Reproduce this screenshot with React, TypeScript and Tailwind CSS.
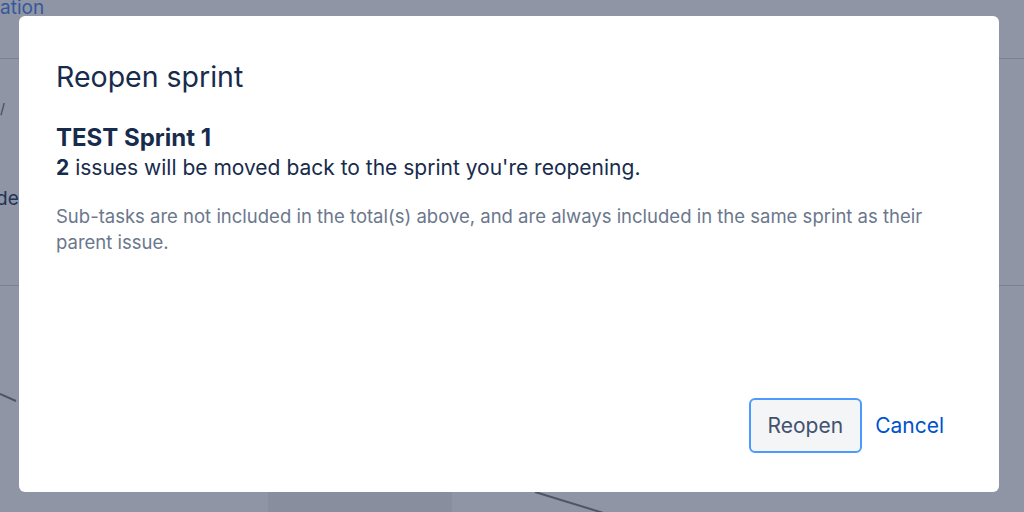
const font = { fontFamily: 'Inter, "Liberation Sans", sans-serif' };

function Backdrop() {
    return (
        <div className="absolute inset-0 bg-[#8f95a4]">
            <div className="absolute left-0 top-[-6px] text-[19px] text-[#1d4a9c] opacity-80">ation</div>
            <div className="absolute left-0 right-0 top-[58px] h-px bg-[#7b8191]" />
            <div className="absolute left-0 top-[98px] text-[14px] text-[#3c4660]">/</div>
            <div className="absolute left-[-4px] top-[185px] text-[19px] text-[#22345a]">de</div>
            <div className="absolute left-0 right-0 top-[285px] h-px bg-[#7b8191]" />
            <div className="absolute left-[268px] top-[480px] w-[184px] h-[40px] bg-[#888e9d]" />
            <svg className="absolute inset-0" width="1024" height="512">
                <line x1="0" y1="394" x2="16" y2="401" stroke="#4f5566" strokeWidth="2" />
                <line x1="535" y1="492" x2="610" y2="515" stroke="#4f5566" strokeWidth="2" />
            </svg>
        </div>
    );
}

export default function App() {
    return (
        <div className="relative w-[1024px] h-[512px] overflow-hidden" style={font}>
            <Backdrop />
            <div className="relative h-full pt-[16px] pb-[20px] pl-[19px] pr-[25px]">
                <div className="flex h-full flex-col rounded-[6px] bg-white pl-[37px] pr-[55px] pt-[44px] pb-[39px]">
                    <h1 className="text-[28.5px] leading-[34px] font-normal text-[#172b4d]">Reopen sprint</h1>
                    <h2 className="mt-[30px] text-[24px] leading-[28px] font-bold text-[#172b4d]">TEST Sprint 1</h2>
                    <p className="mt-[3px] text-[21px] leading-[26px] text-[#172b4d]">
                        <span className="font-bold">2</span> issues will be moved back to the sprint you're reopening.
                    </p>
                    <p className="mt-[22px] text-[18.5px] leading-[26px] text-[#6b778c] max-w-[890px]">
                        Sub-tasks are not included in the total(s) above, and are always included in the same sprint as their parent issue.
                    </p>
                    <div className="mt-auto flex items-center justify-end gap-[13px]">
                        <button className="h-[55px] px-[17px] rounded-[6px] border-2 border-[#4c9aff] bg-[#f4f5f7] text-[21px] text-[#42526e]">
                            Reopen
                        </button>
                        <button className="text-[21px] text-[#0052cc]">Cancel</button>
                    </div>
                </div>
            </div>
        </div>
    );
}
